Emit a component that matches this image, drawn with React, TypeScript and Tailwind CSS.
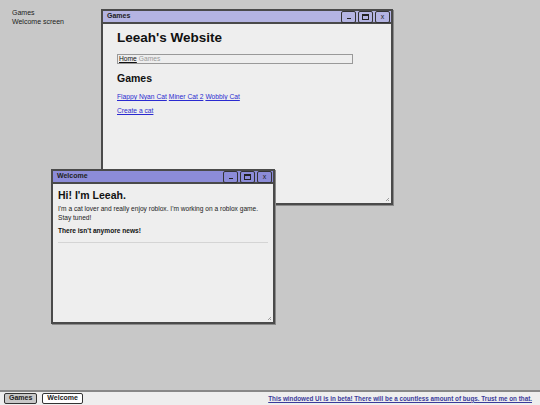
import React from "react";

const font = { fontFamily: '"Liberation Sans", Arial, sans-serif' };

type WinProps = {
  title: string;
  active?: boolean;
  className: string;
  children: React.ReactNode;
};

const TitleButton = ({ children }: { children: React.ReactNode }) => (
  <div className="flex h-[12px] w-[15px] items-center justify-center rounded-[2px] border border-[#333] text-[7px] leading-none text-[#222]">
    {children}
  </div>
);

const Window = ({ title, active, className, children }: WinProps) => (
  <div
    className={`absolute flex flex-col border-2 border-[#4a4a4a] bg-[#eeeeee] shadow-[1px_1px_0_#8a8a8a] ${className}`}
  >
    <div
      className={`flex h-[13px] shrink-0 items-center justify-between border-b-2 border-[#4a4a4a] pl-[4px] pr-[1px] ${
        active ? "bg-[#8c8cd8]" : "bg-[#b4b4e2]"
      }`}
    >
      <span className="text-[7px] font-bold text-[#222]">{title}</span>
      <div className="flex gap-[2px]">
        <TitleButton>
          <span className="mt-[3px] block h-[1px] w-[4px] bg-[#222]" />
        </TitleButton>
        <TitleButton>
          <span className="block h-[6px] w-[7px] border border-[#222] border-t-2" />
        </TitleButton>
        <TitleButton>x</TitleButton>
      </div>
    </div>
    <div className="relative flex-1 overflow-hidden">
      {children}
      {/* resize grip */}
      <svg className="absolute bottom-[1px] right-[1px]" width="5" height="5" viewBox="0 0 5 5">
        <path d="M4 1 L1 4 M4 3 L3 4" stroke="#888" strokeWidth="0.8" />
      </svg>
    </div>
  </div>
);

export default function App() {
  return (
    <div className="relative h-[405px] w-[540px] overflow-hidden bg-[#c8c8c8]" style={font}>
      <div className="absolute left-[12px] top-[8px] text-[7px] leading-[9px] text-[#222]">
        <div>Games</div>
        <div>Welcome screen</div>
      </div>

      <Window title="Games" className="left-[101px] top-[9px] h-[196px] w-[292px]">
        <div className="px-[14px] pt-[6px] text-[#111]">
          <h1 className="text-[13.5px] font-bold leading-[16px]">Leeah's Website</h1>
          <div className="mt-[8px] flex h-[10px] w-[236px] items-center gap-[2px] border border-[#999] px-[1px] text-[6.7px] leading-none">
            <span className="text-[#111] underline">Home</span>
            <span className="text-[#999]">Games</span>
          </div>
          <h2 className="mt-[8px] text-[10.5px] font-bold leading-[12px]">Games</h2>
          <div className="mt-[9px] flex gap-[2px] text-[6.7px] leading-[8px] text-[#2a2ad0] underline">
            <span>Flappy Nyan Cat</span>
            <span>Miner Cat 2</span>
            <span>Wobbly Cat</span>
          </div>
          <div className="mt-[6px] text-[6.7px] leading-[8px] text-[#2a2ad0] underline">Create a cat</div>
        </div>
      </Window>

      <Window title="Welcome" active className="left-[51px] top-[169px] h-[155px] w-[224px]">
        <div className="px-[5px] pt-[5px] text-[#111]">
          <h1 className="text-[10.5px] font-bold leading-[13px]">Hi! I'm Leeah.</h1>
          <p className="mt-[3px] text-[6.6px] leading-[8.5px] text-[#222]">
            I'm a cat lover and really enjoy roblox. I'm working on a roblox game. Stay tuned!
          </p>
          <p className="mt-[5px] text-[6.6px] font-bold leading-[8.5px]">There isn't anymore news!</p>
          <hr className="mt-[6px] border-t border-[#d4d4d4]" />
        </div>
      </Window>

      <div className="absolute bottom-0 left-0 right-0 flex h-[15px] items-center justify-between border-t-2 border-[#888] bg-[#eeeeee] px-[4px]">
        <div className="flex gap-[5px]">
          <div className="flex h-[11px] items-center rounded-[2px] border border-[#333] bg-[#c8c8c8] px-[4px] text-[7px] font-bold text-[#222]">
            Games
          </div>
          <div className="flex h-[11px] items-center rounded-[2px] border border-[#333] bg-white px-[4px] text-[7px] font-bold text-[#222]">
            Welcome
          </div>
        </div>
        <span className="mr-[4px] text-[6.3px] font-bold text-[#3a3a9a] underline">
          This windowed UI is in beta! There will be a countless amount of bugs. Trust me on that.
        </span>
      </div>
    </div>
  );
}
